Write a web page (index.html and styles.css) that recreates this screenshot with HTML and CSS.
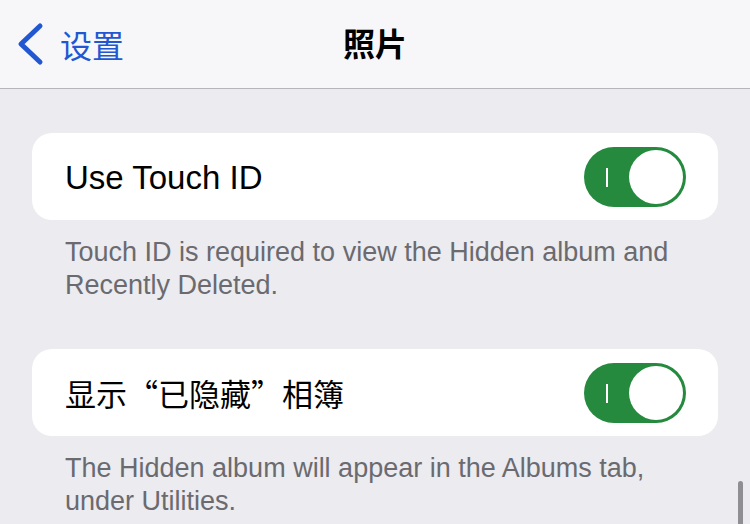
FILE: index.html
```html
<!DOCTYPE html>
<html lang="zh-CN">
<head>
    <meta charset="UTF-8">
    <meta name="viewport" content="width=device-width, initial-scale=1.0">
    <title>照片</title>
    <link rel="stylesheet" href="styles.css">
</head>
<body>
    <header class="nav-bar">
        <a class="back-link" href="#">
            <svg class="back-icon" width="32" height="44" viewBox="0 0 32 44">
                <path d="M28 4 L9 22 L28 40" fill="none" stroke="currentColor" stroke-width="5" stroke-linecap="round" stroke-linejoin="round"/>
            </svg>
            <span class="back-text">设置</span>
        </a>
        <h1 class="nav-title">照片</h1>
    </header>

    <main class="settings">
        <section class="group">
            <div class="cell">
                <span class="cell-label">Use Touch ID</span>
                <div class="switch on">
                    <span class="switch-mark"></span>
                    <span class="switch-knob"></span>
                </div>
            </div>
            <p class="group-footer">Touch ID is required to view the Hidden album and Recently Deleted.</p>
        </section>

        <section class="group">
            <div class="cell">
                <span class="cell-label cjk">显示“已隐藏”相簿</span>
                <div class="switch on">
                    <span class="switch-mark"></span>
                    <span class="switch-knob"></span>
                </div>
            </div>
            <p class="group-footer">The Hidden album will appear in the Albums tab, under Utilities.</p>
        </section>
    </main>

    <div class="scroll-indicator"></div>
</body>
</html>
```

FILE: styles.css
```css
/* Global */
body {
    margin: 0;
    padding: 0;
    background-color: #ebebf0;
    font-family: 'Liberation Sans', 'Noto Sans CJK SC', sans-serif;
    color: #000;
    overflow: hidden;
    height: 524px;
}

/* Navigation bar */
.nav-bar {
    height: 88px;
    background-color: #f7f7f9;
    border-bottom: 1px solid #b6b6ba;
    display: flex;
    align-items: center;
    justify-content: center;
    position: relative;
}

.back-link {
    position: absolute;
    left: 12px;
    top: 22px;
    display: flex;
    align-items: center;
    color: #2158d2;
    text-decoration: none;
}

.back-icon {
    display: block;
}

.back-text {
    margin-left: 16px;
    font-family: 'Noto Sans CJK SC', sans-serif;
    font-size: 32px;
    line-height: 38px;
}

.nav-title {
    margin: 0;
    font-family: 'Noto Sans CJK SC', sans-serif;
    font-size: 32px;
    font-weight: 700;
    line-height: 38px;
    padding-bottom: 5px;
}

/* Settings groups */
.settings {
    padding: 44px 32px 0;
}

.group {
    margin-bottom: 47px;
}

.cell {
    background-color: #fff;
    border-radius: 20px;
    height: 87px;
    display: flex;
    align-items: center;
    justify-content: space-between;
    padding: 0 32px 0 33px;
}

.cell-label {
    font-size: 33px;
    padding-top: 2px;
}

.cell-label.cjk {
    font-family: 'Noto Sans CJK SC', sans-serif;
    font-size: 31px;
    padding-top: 0;
}

.group-footer {
    margin: 16px 0 0;
    padding: 0 20px 0 33px;
    font-size: 27px;
    line-height: 33px;
    color: #6a6a6f;
}

/* Switch */
.switch {
    position: relative;
    width: 102px;
    height: 60px;
    border-radius: 30px;
    background-color: #258a3e;
}

.switch-mark {
    position: absolute;
    left: 22px;
    top: 21px;
    width: 2px;
    height: 19px;
    background-color: #fff;
}

.switch-knob {
    position: absolute;
    right: 3px;
    top: 3px;
    width: 54px;
    height: 54px;
    border-radius: 50%;
    background-color: #fff;
}

.scroll-indicator {
    position: absolute;
    left: 738px;
    top: 481px;
    width: 5px;
    height: 50px;
    border-radius: 3px;
    background-color: #8e8e93;
}
```
